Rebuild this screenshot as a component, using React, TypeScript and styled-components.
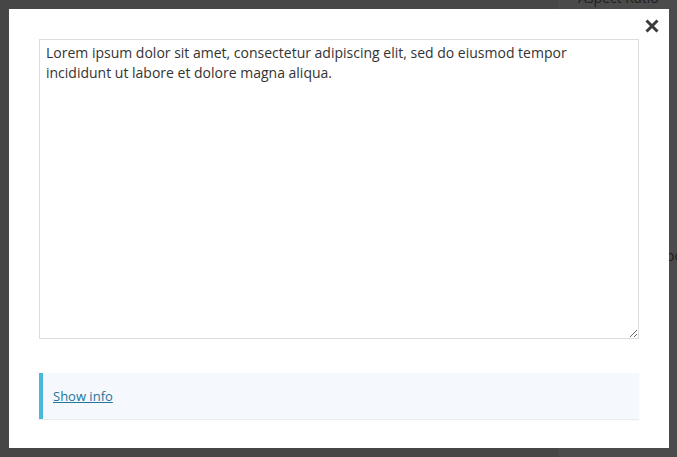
import React from "react";
import styled, { createGlobalStyle } from "styled-components";

const Global = createGlobalStyle`
  html, body { margin: 0; padding: 0; }
  body {
    background: #474747;
    font-family: "Open Sans", "Noto Sans", sans-serif;
    width: 677px;
    height: 457px;
    overflow: hidden;
  }
`;

const Page = styled.div`
  display: flex;
  width: 677px;
  height: 457px;
`;

const MainArea = styled.div`
  flex: 1;
  background: #464646;
`;

const Sidebar = styled.div`
  width: 119px;
  background: #4b4b4b;
  display: flex;
  flex-direction: column;
  color: #1e1e1e;
  font-size: 14px;
`;

const SidebarTitle = styled.div`
  margin-top: -12px;
  padding-left: 20px;
  line-height: 20px;
  white-space: nowrap;
`;

const SidebarText = styled.div`
  margin-top: 238px;
  padding-left: 108px;
  line-height: 20px;
  white-space: nowrap;
`;

const Overlay = styled.div`
  position: fixed;
  inset: 0;
  padding: 9px 8px 9px 9px;
  display: flex;
`;

const Modal = styled.div`
  position: relative;
  flex: 1;
  background: #ffffff;
  padding: 30px 30px 29px 30px;
  display: flex;
  flex-direction: column;
  box-sizing: border-box;
`;

const CloseButton = styled.button`
  position: absolute;
  top: 10px;
  right: 10px;
  width: 14px;
  height: 14px;
  padding: 0;
  border: 0;
  background: none;
  display: flex;
  align-items: center;
  justify-content: center;
  cursor: pointer;
`;

const TextArea = styled.textarea`
  width: 600px;
  height: 300px;
  box-sizing: border-box;
  border: 1px solid #dddddd;
  padding: 3px 6px;
  margin: 0;
  font-family: "Open Sans", "Noto Sans", sans-serif;
  font-size: 14px;
  line-height: 20px;
  color: #333333;
  resize: both;
  outline: none;
`;

const InfoBox = styled.div`
  margin-top: 34px;
  height: 46px;
  box-sizing: border-box;
  background: #f5f9fe;
  border-left: 4px solid #4ab8dd;
  box-shadow: 0 1px 1px rgba(0, 0, 0, 0.08);
  display: flex;
  align-items: center;
  padding-left: 10px;
`;

const InfoLink = styled.a`
  color: #21759b;
  font-size: 13px;
  text-decoration: underline;
  line-height: 18px;
  margin-top: -1px;
`;

export default function App() {
  return (
    <>
      <Global />
      <Page>
        <MainArea />
        <Sidebar>
          <SidebarTitle>Aspect Ratio</SidebarTitle>
          <SidebarText>oc</SidebarText>
        </Sidebar>
      </Page>
      <Overlay>
        <Modal>
          <CloseButton aria-label="Close">
            <svg width="14" height="14" viewBox="0 0 14 14">
              <path d="M1.5 1.5 L12.5 12.5 M12.5 1.5 L1.5 12.5" stroke="#3c3c3c" strokeWidth="3" strokeLinecap="butt" />
            </svg>
          </CloseButton>
          <TextArea
            defaultValue="Lorem ipsum dolor sit amet, consectetur adipiscing elit, sed do eiusmod tempor incididunt ut labore et dolore magna aliqua."
          />
          <InfoBox>
            <InfoLink href="#">Show info</InfoLink>
          </InfoBox>
        </Modal>
      </Overlay>
    </>
  );
}
